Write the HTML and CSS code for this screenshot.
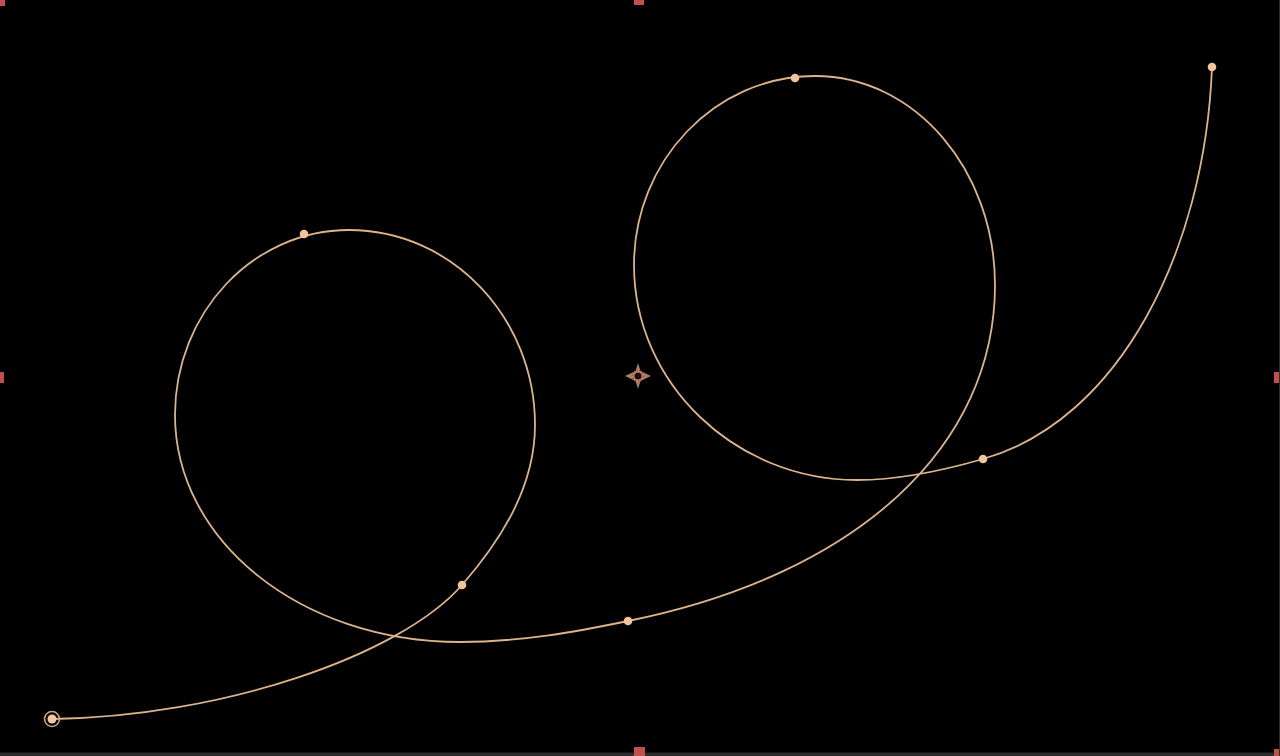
FILE: index.html
```html
<!DOCTYPE html>
<html>
<head>
<meta charset="utf-8">
<link rel="stylesheet" href="styles.css">
</head>
<body>
<div class="stage">
<svg class="canvas" width="1280" height="756" viewBox="0 0 1280 756" xmlns="http://www.w3.org/2000/svg">
  <rect x="0" y="0" width="1280" height="756" fill="#2c2c2c"/>
  <rect x="0" y="0" width="1279" height="752.5" fill="#000"/>
  <path class="curve" d="M52,719 C220,717 400,656 462,585 C497,545 535,490 535,425 C535,318 452,230 349,230 C253,230 175,313 175,415 C175,540 300,642 460,642 C520,642 575,632 628,621 C860,574 995,445 995,285 C995,170 915,76 815,76 C715,76 634,161 634,265 C634,383 735,480 857,480 C900,480 945,470 983,459 C1120,420 1205,250 1212,67"/>
  <g class="dots">
    <circle cx="462" cy="585" r="4.3"/>
    <circle cx="304" cy="234" r="4.3"/>
    <circle cx="628" cy="621" r="4.3"/>
    <circle cx="795" cy="78" r="4.3"/>
    <circle cx="983" cy="459" r="4.3"/>
    <circle cx="1212" cy="67" r="4.3"/>
  </g>
  <circle cx="52" cy="719" r="7.5" class="start-ring"/>
  <circle cx="52" cy="719" r="4.5" class="start-dot"/>
  <g class="cross">
    <path d="M638,363 L640.5,371 L651,376 L640.5,381 L638,389 L635.5,381 L625,376 L635.5,371 Z" fill="#a08066"/>
    <circle cx="638" cy="376" r="5.5" fill="#d0a890"/>
    <circle cx="638" cy="376" r="5" fill="none" stroke="#c2433f" stroke-width="1.6" stroke-dasharray="2 1"/>
    <circle cx="638" cy="376" r="3.6" fill="#111"/>
  </g>
  <g class="handles">
    <rect x="0" y="0" width="5" height="6"/>
    <rect x="634" y="0" width="10" height="5"/>
    <rect x="0" y="372" width="4" height="11"/>
    <rect x="1274" y="372" width="5" height="11"/>
    <rect x="634" y="747" width="11" height="9"/>
    <rect x="1274" y="749" width="5" height="7"/>
  </g>
</svg>
</div>
</body>
</html>
```
FILE: styles.css
```css
html, body {
  margin: 0;
  padding: 0;
  background: #000;
  overflow: hidden;
}
.stage {
  width: 1280px;
  height: 756px;
}
.canvas {
  display: block;
}
.curve {
  fill: none;
  stroke: #dcb48c;
  stroke-width: 1.8;
}
.dots circle {
  fill: #f0c49c;
}
.start-ring {
  fill: none;
  stroke: #c8a482;
  stroke-width: 1.6;
}
.start-dot {
  fill: #f2c8a2;
}
.handles rect {
  fill: #c0504d;
}
```
